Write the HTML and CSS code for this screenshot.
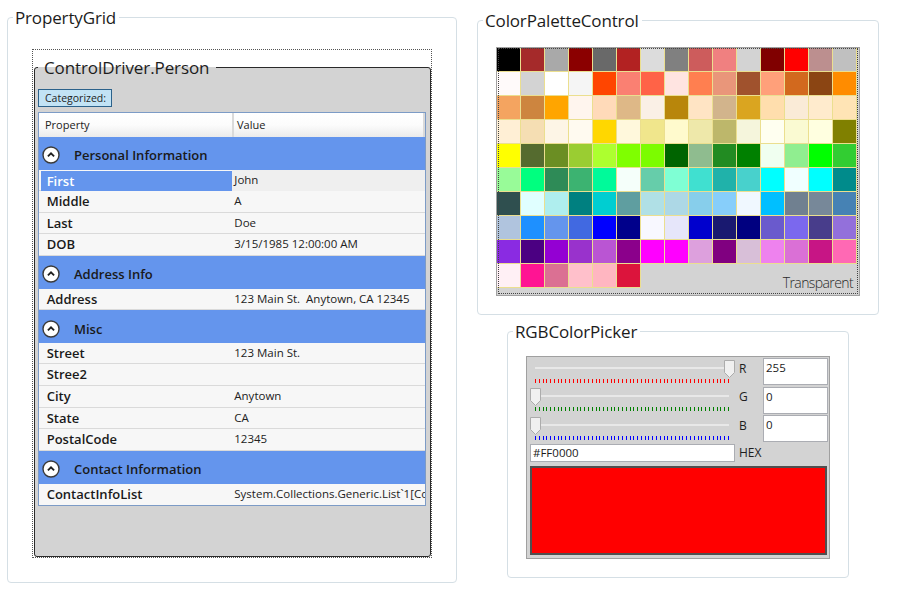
FILE: index.html
```html
<!DOCTYPE html>
<html>
<head>
<meta charset="utf-8">
<title>Controls</title>
<link rel="stylesheet" href="styles.css">
</head>
<body>
<div class="page">
  <div class="col-left">
    <fieldset class="gb gb-pg">
      <legend>PropertyGrid</legend>
      <div class="gb-pg-body">
        <div class="focus-rect">
          <fieldset class="pg-box">
            <legend>ControlDriver.Person</legend>
            <div class="pg-toolbar"><span class="toggle">Categorized:</span></div>
            <div class="grid">
              <div class="grid-head"><div class="hc">Property</div><div class="hc hc-val">Value</div></div>

              <div class="cat"><svg class="cat-ico" width="18" height="18" viewBox="0 0 18 18"><circle cx="9" cy="9" r="8" fill="#fff" stroke="#3a3a3a" stroke-width="1.4"/><path d="M5.9 10.4 L9 7.3 L12.1 10.4" fill="none" stroke="#1e1e1e" stroke-width="1.8"/></svg><span>Personal Information</span></div>
              <div class="prow sel"><div class="pname">First</div><div class="pval">John</div></div>
              <div class="prow"><div class="pname">Middle</div><div class="pval">A</div></div>
              <div class="prow"><div class="pname">Last</div><div class="pval">Doe</div></div>
              <div class="prow"><div class="pname">DOB</div><div class="pval">3/15/1985 12:00:00 AM</div></div>

              <div class="cat"><svg class="cat-ico" width="18" height="18" viewBox="0 0 18 18"><circle cx="9" cy="9" r="8" fill="#fff" stroke="#3a3a3a" stroke-width="1.4"/><path d="M5.9 10.4 L9 7.3 L12.1 10.4" fill="none" stroke="#1e1e1e" stroke-width="1.8"/></svg><span>Address Info</span></div>
              <div class="prow"><div class="pname">Address</div><div class="pval">123 Main St.  Anytown, CA 12345</div></div>

              <div class="cat"><svg class="cat-ico" width="18" height="18" viewBox="0 0 18 18"><circle cx="9" cy="9" r="8" fill="#fff" stroke="#3a3a3a" stroke-width="1.4"/><path d="M5.9 10.4 L9 7.3 L12.1 10.4" fill="none" stroke="#1e1e1e" stroke-width="1.8"/></svg><span>Misc</span></div>
              <div class="prow"><div class="pname">Street</div><div class="pval">123 Main St.</div></div>
              <div class="prow"><div class="pname">Stree2</div><div class="pval"></div></div>
              <div class="prow"><div class="pname">City</div><div class="pval">Anytown</div></div>
              <div class="prow"><div class="pname">State</div><div class="pval">CA</div></div>
              <div class="prow"><div class="pname">PostalCode</div><div class="pval">12345</div></div>

              <div class="cat"><svg class="cat-ico" width="18" height="18" viewBox="0 0 18 18"><circle cx="9" cy="9" r="8" fill="#fff" stroke="#3a3a3a" stroke-width="1.4"/><path d="M5.9 10.4 L9 7.3 L12.1 10.4" fill="none" stroke="#1e1e1e" stroke-width="1.8"/></svg><span>Contact Information</span></div>
              <div class="prow last"><div class="pname">ContactInfoList</div><div class="pval">System.Collections.Generic.List`1[ControlDriver.ContactInfo]</div></div>
            </div>
          </fieldset>
        </div>
      </div>
    </fieldset>
  </div>

  <div class="col-right">
    <fieldset class="gb gb-pal">
      <legend>ColorPaletteControl</legend>
      <div class="gb-pal-body">
        <div class="palette">
          <div class="pal-row">
            <i style="background:#000000"></i><i style="background:#A52A2A"></i><i style="background:#A9A9A9"></i><i style="background:#8B0000"></i><i style="background:#696969"></i><i style="background:#B22222"></i><i style="background:#DCDCDC"></i><i style="background:#808080"></i><i style="background:#CD5C5C"></i><i style="background:#F08080"></i><i style="background:#D3D3D3"></i><i style="background:#800000"></i><i style="background:#FF0000"></i><i style="background:#BC8F8F"></i><i style="background:#C0C0C0"></i>
          </div>
          <div class="pal-row">
            <i style="background:#FFFAFA"></i><i></i><i style="background:#FFFFFF"></i><i style="background:#F5F5F5"></i><i style="background:#FF4500"></i><i style="background:#FA8072"></i><i style="background:#FF6347"></i><i style="background:#FFE4E1"></i><i style="background:#FF7F50"></i><i style="background:#E9967A"></i><i style="background:#A0522D"></i><i style="background:#FFA07A"></i><i style="background:#D2691E"></i><i style="background:#8B4513"></i><i style="background:#FF8C00"></i>
          </div>
          <div class="pal-row">
            <i style="background:#F4A460"></i><i style="background:#CD853F"></i><i style="background:#FFA500"></i><i style="background:#FFF5EE"></i><i style="background:#FFDAB9"></i><i style="background:#DEB887"></i><i style="background:#FAF0E6"></i><i style="background:#B8860B"></i><i style="background:#FFE4C4"></i><i style="background:#D2B48C"></i><i style="background:#DAA520"></i><i style="background:#FFDEAD"></i><i style="background:#FAEBD7"></i><i style="background:#FFEBCD"></i><i style="background:#FFE4B5"></i>
          </div>
          <div class="pal-row">
            <i style="background:#FFEFD5"></i><i style="background:#F5DEB3"></i><i style="background:#FDF5E6"></i><i style="background:#FFFAF0"></i><i style="background:#FFD700"></i><i style="background:#FFF8DC"></i><i style="background:#F0E68C"></i><i style="background:#FFFACD"></i><i style="background:#EEE8AA"></i><i style="background:#BDB76B"></i><i style="background:#F5F5DC"></i><i style="background:#FFFFF0"></i><i style="background:#FAFAD2"></i><i style="background:#FFFFE0"></i><i style="background:#808000"></i>
          </div>
          <div class="pal-row">
            <i style="background:#FFFF00"></i><i style="background:#556B2F"></i><i style="background:#6B8E23"></i><i style="background:#9ACD32"></i><i style="background:#ADFF2F"></i><i style="background:#7FFF00"></i><i style="background:#7CFC00"></i><i style="background:#006400"></i><i style="background:#8FBC8F"></i><i style="background:#228B22"></i><i style="background:#008000"></i><i style="background:#F0FFF0"></i><i style="background:#90EE90"></i><i style="background:#00FF00"></i><i style="background:#32CD32"></i>
          </div>
          <div class="pal-row">
            <i style="background:#98FB98"></i><i style="background:#00FF7F"></i><i style="background:#2E8B57"></i><i style="background:#3CB371"></i><i style="background:#00FA9A"></i><i style="background:#F5FFFA"></i><i style="background:#66CDAA"></i><i style="background:#7FFFD4"></i><i style="background:#40E0D0"></i><i style="background:#20B2AA"></i><i style="background:#48D1CC"></i><i style="background:#00FFFF"></i><i style="background:#F0FFFF"></i><i style="background:#00FFFF"></i><i style="background:#008B8B"></i>
          </div>
          <div class="pal-row">
            <i style="background:#2F4F4F"></i><i style="background:#E0FFFF"></i><i style="background:#AFEEEE"></i><i style="background:#008080"></i><i style="background:#00CED1"></i><i style="background:#5F9EA0"></i><i style="background:#B0E0E6"></i><i style="background:#ADD8E6"></i><i style="background:#87CEEB"></i><i style="background:#87CEFA"></i><i style="background:#F0F8FF"></i><i style="background:#00BFFF"></i><i style="background:#708090"></i><i style="background:#778899"></i><i style="background:#4682B4"></i>
          </div>
          <div class="pal-row">
            <i style="background:#B0C4DE"></i><i style="background:#1E90FF"></i><i style="background:#6495ED"></i><i style="background:#4169E1"></i><i style="background:#0000FF"></i><i style="background:#00008B"></i><i style="background:#F8F8FF"></i><i style="background:#E6E6FA"></i><i style="background:#0000CD"></i><i style="background:#191970"></i><i style="background:#000080"></i><i style="background:#6A5ACD"></i><i style="background:#7B68EE"></i><i style="background:#483D8B"></i><i style="background:#9370DB"></i>
          </div>
          <div class="pal-row">
            <i style="background:#8A2BE2"></i><i style="background:#4B0082"></i><i style="background:#9400D3"></i><i style="background:#9932CC"></i><i style="background:#BA55D3"></i><i style="background:#8B008B"></i><i style="background:#FF00FF"></i><i style="background:#FF00FF"></i><i style="background:#DDA0DD"></i><i style="background:#800080"></i><i style="background:#D8BFD8"></i><i style="background:#EE82EE"></i><i style="background:#DA70D6"></i><i style="background:#C71585"></i><i style="background:#FF69B4"></i>
          </div>
          <div class="pal-row pal-last">
            <i style="background:#FFF0F5"></i><i style="background:#FF1493"></i><i style="background:#DB7093"></i><i style="background:#FFC0CB"></i><i style="background:#FFB6C1"></i><i style="background:#DC143C"></i>
            <span class="transp">Transparent</span>
          </div>
        </div>
      </div>
    </fieldset>

    <fieldset class="gb gb-rgb">
      <legend>RGBColorPicker</legend>
      <div class="gb-rgb-body">
        <div class="rgb-panel">
          <div class="rgb-grid">
            <div class="slider">
              <div class="track"></div>
              <div class="ticks tk-r"><i></i><i></i><i></i><i></i><i></i><i></i><i></i><i></i><i></i><i></i><i></i><i></i><i></i><i></i><i></i><i></i><i></i><i></i><i></i><i></i><i></i><i></i><i></i><i></i><i></i><i></i><i></i><i></i><i></i><i></i><i></i><i></i><i></i><i></i><i></i><i></i><i></i><i></i><i></i><i></i><i></i><i></i><i></i><i></i><i></i><i></i><i></i><i></i><i></i><i></i><i></i><i></i></div>
              <svg class="thumb" style="left:194px" width="11" height="18" viewBox="0 0 11 18"><path d="M0.5 0.5H10.5V12.5L5.5 17.5L0.5 12.5Z" fill="#f0f0f0" stroke="#acacac"/></svg>
            </div>
            <div class="lbl">R</div>
            <div class="tb">255</div>

            <div class="slider">
              <div class="track"></div>
              <div class="ticks tk-g"><i></i><i></i><i></i><i></i><i></i><i></i><i></i><i></i><i></i><i></i><i></i><i></i><i></i><i></i><i></i><i></i><i></i><i></i><i></i><i></i><i></i><i></i><i></i><i></i><i></i><i></i><i></i><i></i><i></i><i></i><i></i><i></i><i></i><i></i><i></i><i></i><i></i><i></i><i></i><i></i><i></i><i></i><i></i><i></i><i></i><i></i><i></i><i></i><i></i><i></i><i></i><i></i></div>
              <svg class="thumb" style="left:0px" width="11" height="18" viewBox="0 0 11 18"><path d="M0.5 0.5H10.5V12.5L5.5 17.5L0.5 12.5Z" fill="#f0f0f0" stroke="#acacac"/></svg>
            </div>
            <div class="lbl">G</div>
            <div class="tb">0</div>

            <div class="slider">
              <div class="track"></div>
              <div class="ticks tk-b"><i></i><i></i><i></i><i></i><i></i><i></i><i></i><i></i><i></i><i></i><i></i><i></i><i></i><i></i><i></i><i></i><i></i><i></i><i></i><i></i><i></i><i></i><i></i><i></i><i></i><i></i><i></i><i></i><i></i><i></i><i></i><i></i><i></i><i></i><i></i><i></i><i></i><i></i><i></i><i></i><i></i><i></i><i></i><i></i><i></i><i></i><i></i><i></i><i></i><i></i><i></i><i></i></div>
              <svg class="thumb" style="left:0px" width="11" height="18" viewBox="0 0 11 18"><path d="M0.5 0.5H10.5V12.5L5.5 17.5L0.5 12.5Z" fill="#f0f0f0" stroke="#acacac"/></svg>
            </div>
            <div class="lbl">B</div>
            <div class="tb">0</div>
          </div>
          <div class="hex-row">
            <div class="hex-tb">#FF0000</div>
            <div class="hex-lbl">HEX</div>
          </div>
          <div class="preview"></div>
        </div>
      </div>
    </fieldset>
  </div>
</div>
</body>
</html>
```
FILE: styles.css
```css
* { box-sizing: border-box; }
html, body { margin: 0; padding: 0; background: #fff; }
body {
  font-family: "Open Sans", "Noto Sans", sans-serif;
  color: #1b1b1b;
  width: 900px;
  height: 596px;
  overflow: hidden;
}
.page { display: flex; align-items: flex-start; }
.col-left { width: 457px; padding-left: 7px; }
.col-right { width: 442px; display: flex; flex-direction: column; align-items: center; }

/* group boxes */
fieldset.gb {
  margin: 0;
  padding: 0;
  border: 1px solid #d5dfe5;
  border-radius: 4px;
  min-inline-size: 0;
}
fieldset.gb > legend {
  font-size: 17px;
  line-height: 23px;
  padding: 0 3px 0 2px;
  margin-left: 5px;
  color: #1c1c1c;
  letter-spacing: -0.15px;
}
fieldset.gb-pg { width: 450px; margin-top: 6px; }
.gb-pg-body { padding: 20px 24px 24px 24px; }

.focus-rect {
  border: 1px dotted #555;
  padding: 8px 0 0 1px;
}
fieldset.pg-box {
  margin: 0;
  width: 397px;
  min-inline-size: 0;
  padding: 12px 4px 50px 3px;
  border: 1px solid #2a2a2a;
  border-radius: 3px;
  background: #d3d3d3;
}
fieldset.pg-box > legend {
  font-size: 17px;
  line-height: 19px;
  padding: 0 7px 0 6px;
  margin-left: 0;
  color: #1c1c1c;
  letter-spacing: -0.1px;
}
.pg-toolbar { height: 18px; margin-bottom: 5px; display: flex; }
.toggle {
  display: block;
  width: 74px;
  height: 18px;
  border: 1px solid #2c628b;
  background: #c2e3f5;
  font-size: 10.5px;
  line-height: 16px;
  padding-left: 6px;
  color: #1e1e1e;
}

/* property grid */
.grid {
  border: 1px solid #7c9bc6;
  background: #f7f7f7;
  width: 388px;
}
.grid-head {
  display: grid;
  grid-template-columns: 193px 1fr;
  height: 24px;
  background: linear-gradient(#ffffff 0%, #fcfcfc 50%, #ebebeb 100%);
  font-size: 11px;
  line-height: 24px;
  color: #222;
}
.hc { padding-left: 6px; }
.hc-val { border-left: 2px solid #dadada; border-right: 2px solid #dadada; padding-left: 3px; }

.cat {
  height: 32.5px;
  background: #6495ed;
  display: flex;
  align-items: center;
  padding: 4px 0 0 3px;
  font-size: 13px;
  font-weight: 600;
  color: #1a1a1a;
}
.cat-ico { display: block; margin-right: 14px; flex: none; }

.prow {
  display: grid;
  grid-template-columns: 193px 1fr;
  height: 21.667px;
  border-bottom: 1px solid #dadada;
}
.prow.last { border-bottom: none; }
.pname {
  font-size: 13px;
  font-weight: 600;
  line-height: 21px;
  padding-left: 7.7px;
  color: #1a1a1a;
  white-space: nowrap;
}
.pval {
  font-size: 11.5px;
  line-height: 19.5px;
  padding-left: 2.3px;
  color: #222;
  white-space: pre;
  overflow: hidden;
}
.prow.sel .pname {
  background: #6495ed;
  color: #fff;
  margin: 1px 0 0 2px;
  padding-left: 5.7px;
  line-height: 20px;
}
.prow.sel .pval { background: #efefef; }

/* color palette */
fieldset.gb-pal { width: 402px; margin-top: 9px; }
.gb-pal-body { padding: 15px 18px 18px 18px; }
.palette {
  position: relative;
  width: 364px;
  border: 1px solid #a0a0a0;
  background: #d3d3d3;
  padding-right: 2px;
}
.palette::after {
  content: "";
  position: absolute;
  left: 1px;
  top: 0;
  right: 1px;
  bottom: 1px;
  border: 1px dotted #444;
  pointer-events: none;
}
.pal-row { display: flex; }
.pal-row i {
  display: block;
  width: 24px;
  height: 24px;
  flex: none;
  border-right: 1px solid #ebdf8f;
  border-bottom: 1px solid #ebdf8f;
}
.pal-last { height: 31px; align-items: flex-start; }
.transp {
  flex: 1;
  align-self: flex-end;
  text-align: right;
  font-size: 14px;
  font-weight: 300;
  line-height: 18px;
  letter-spacing: -0.6px;
  padding-right: 4px;
  margin-bottom: 3px;
  color: #2a2a2a;
}

/* RGB picker */
fieldset.gb-rgb { width: 342px; margin-top: 5px; }
.gb-rgb-body { padding: 13px 18px 18px 18px; }
.rgb-panel {
  width: 304px;
  border: 1px solid #a0a0a0;
  background: #d3d3d3;
}
.rgb-grid {
  display: grid;
  grid-template-columns: 212px 24px 65px;
  grid-auto-rows: 28.333px;
}
.slider {
  position: relative;
  margin-left: 3px;
  width: 205px;
  padding-top: 10px;
}
.track {
  height: 2px;
  margin: 0 6px 0 5px;
  background: #e8e8e8;
}
.ticks {
  display: flex;
  justify-content: space-between;
  height: 4px;
  margin: 10px 6px 0 5px;
}
.ticks i { display: block; width: 1px; height: 4px; }
.tk-r i { background: #ff0000; }
.tk-g i { background: #008000; }
.tk-b i { background: #0000ff; }
.thumb { position: absolute; top: 3px; display: block; }
.lbl {
  font-size: 12px;
  line-height: 16px;
  padding-top: 4px;
  color: #1e1e1e;
}
.tb {
  align-self: end;
  height: 27px;
  border: 1px solid #abadb3;
  background: #fff;
  font-size: 11.5px;
  line-height: 15px;
  padding: 1px 2px 0 2px;
  color: #1a1a1a;
}
.hex-row { display: flex; margin-top: 2px; height: 18px; }
.hex-tb {
  margin-left: 3px;
  width: 205px;
  height: 18px;
  border: 1px solid #abadb3;
  background: #fff;
  font-size: 11.5px;
  line-height: 16px;
  padding-left: 2px;
  color: #1a1a1a;
}
.hex-lbl {
  margin-left: 4px;
  font-size: 12px;
  line-height: 18px;
  color: #1e1e1e;
}
.preview {
  margin: 4px 2px 3px 3px;
  height: 89px;
  border: 2px solid #4f4f4f;
  background: #ff0000;
}
```
